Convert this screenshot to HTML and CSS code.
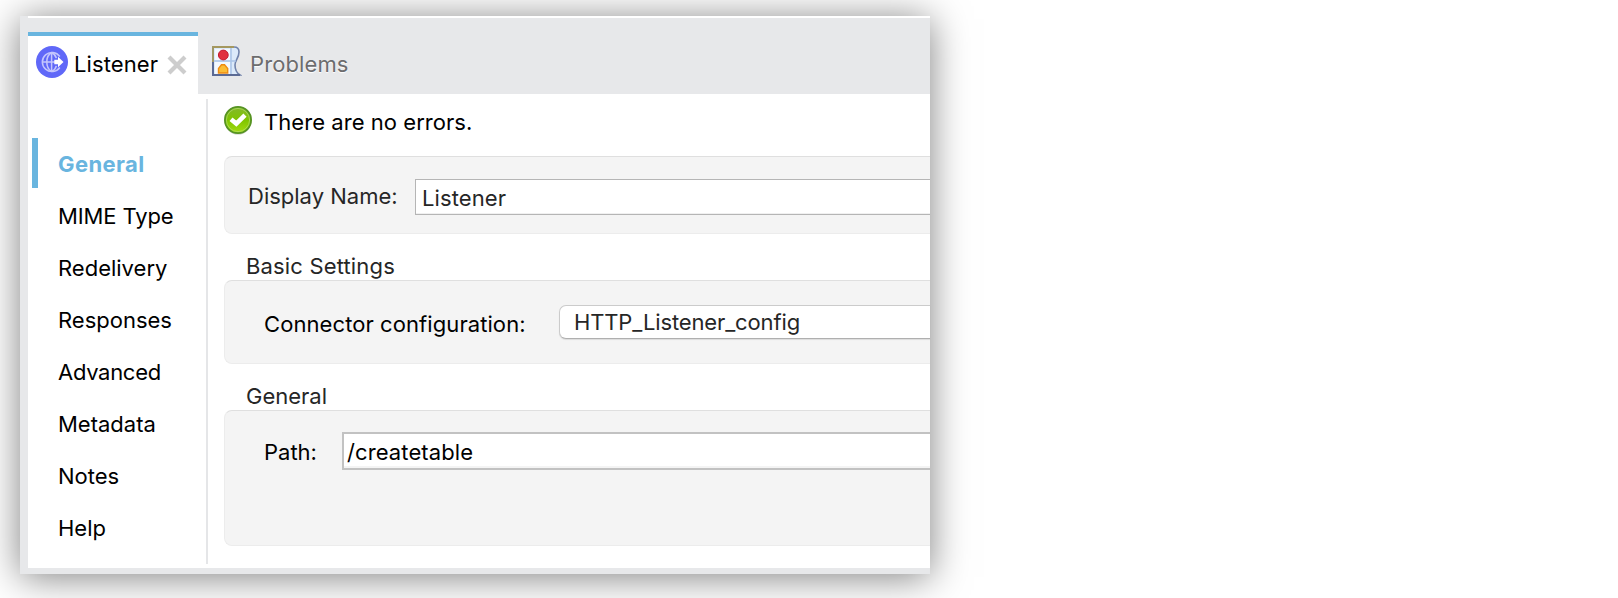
FILE: index.html
```html
<!DOCTYPE html>
<html lang="en">
<head>
<meta charset="utf-8">
<title>Listener</title>
<link rel="stylesheet" href="styles.css">
</head>
<body>
<main class="window">
  <header class="tabs">
    <div class="tab tab-active">
      <svg class="icon-globe" width="32" height="32" viewBox="0 0 32 32">
        <circle cx="16" cy="16" r="16" fill="#6068f8"/>
        <g fill="none" stroke="#c4c6fd" stroke-width="1.5">
          <path d="M23.8 10.5A9.6 9.6 0 1 0 23.8 21.5"/>
          <path d="M15.6 6.5V25.5M6.4 16H19M15.6 6.5C9.2 10 9.2 22 15.6 25.5M15.6 6.5Q19.4 8.3 20.3 12.2M15.6 25.5Q19.4 23.7 20.3 19.8"/>
        </g>
        <path d="M18.3 13.7H22V10.7L27.5 16L22 21.3V18.3H18.3Z" fill="#fff"/>
      </svg>
      <span class="tab-title">Listener</span>
      <svg class="icon-close" width="20" height="20" viewBox="0 0 20 20"><path d="M2 2L18 18M18 2L2 18" stroke="#cdcdcd" stroke-width="4.2"/></svg>
    </div>
    <div class="tab">
      <svg class="icon-problems" width="30" height="30" viewBox="0 0 30 30">
        <path d="M1 1H22Q27 1 27 6C27 12 23 14 23 19Q23 26 28 29H1Z" fill="#dceafa" stroke="#7183ab" stroke-width="1.6"/>
        <path d="M3 3H18V14H3ZM3 16H18V28H3Z" fill="#f3f8fe"/>
        <path d="M2 15H24M19 2V28" stroke="#a9c4e8" stroke-width="1.5"/>
        <path d="M1 28V1H22" fill="none" stroke="#a5985f" stroke-width="1.8"/>
        <path d="M1 16V29H28" fill="none" stroke="#5b6a94" stroke-width="2"/>
        <circle cx="11.3" cy="9" r="4.9" fill="#e0303e" stroke="#c41c30" stroke-width="1"/>
        <path d="M6.5 27V22.5L9.5 18.8H12.5L15.7 22.5V27Z" fill="#fbbd35" stroke="#ee8b12" stroke-width="1.4"/>
      </svg>
      <span class="tab-title muted">Problems</span>
    </div>
  </header>
  <div class="body">
    <nav class="side">
      <a class="item selected">General</a>
      <a class="item tight">MIME Type</a>
      <a class="item">Redelivery</a>
      <a class="item">Responses</a>
      <a class="item tighter">Advanced</a>
      <a class="item">Metadata</a>
      <a class="item">Notes</a>
      <a class="item">Help</a>
    </nav>
    <section class="content">
      <div class="status">
        <svg width="30" height="30" viewBox="0 0 30 30">
          <defs><linearGradient id="ok" x1="0" y1="0" x2="0" y2="1"><stop offset="0" stop-color="#84b82c"/><stop offset=".5" stop-color="#7fc400"/><stop offset="1" stop-color="#a4dc10"/></linearGradient></defs>
          <ellipse cx="15" cy="16.2" rx="13.2" ry="13.4" fill="#8f9a88" opacity=".5"/>
          <circle cx="15" cy="15" r="13.1" fill="url(#ok)" stroke="#569322" stroke-width="1.8"/>
          <circle cx="15" cy="15" r="11.6" fill="none" stroke="#b5dc72" stroke-width="1" opacity=".7"/>
          <path d="M8 14.2L13.3 18.6L22 10.2" fill="none" stroke="#fff" stroke-width="4.6"/>
        </svg>
        <span>There are no errors.</span>
      </div>
      <div class="panel panel-name">
        <span class="label soft">Display Name:</span>
        <div class="input input-name">Listener</div>
      </div>
      <h2 class="heading loose">Basic Settings</h2>
      <div class="panel panel-config">
        <span class="label">Connector configuration:</span>
        <div class="select">HTTP_Listener_config</div>
      </div>
      <h2 class="heading">General</h2>
      <div class="panel panel-path">
        <span class="label">Path:</span>
        <div class="input input-path">/createtable</div>
      </div>
    </section>
  </div>
</main>
</body>
</html>
```
FILE: styles.css
```css
* { box-sizing: border-box; }
body {
  margin: 0;
  padding: 16px 0 0 20px;
  height: 598px;
  overflow: hidden;
  background: #fff;
  font: 22px/26px Inter, "Liberation Sans", sans-serif;
  color: #000;
  white-space: nowrap;
}
.window {
  width: 910px;
  height: 558px;
  padding: 0 0 6px 8px;
  background: #e7e8ea;
  box-shadow: 0 3px 36px rgba(0, 0, 0, .5);
  display: flex;
  flex-direction: column;
}
.tabs {
  height: 78px;
  flex: none;
  border-top: 2px solid #fff;
  padding-top: 14px;
  display: flex;
}
.tab { display: flex; height: 62px; padding: 12px 0 0 14px; }
.tab-active {
  width: 170px;
  padding: 10px 0 0 8px;
  background: #fff;
  border-top: 4px solid #69b5df;
}
.tab-title { margin: 5px 0 0 6px; letter-spacing: .1px; }
.tab-active .tab-title { width: 84px; }
.icon-close { margin: 9px 0 0 9px; }
.icon-problems { margin-top: 2px; }
.muted { color: #6c6c6e; margin: 7px 0 0 8px; text-shadow: 0 1px 1px #fff; }
.body { flex: 1; min-height: 0; display: flex; background: #fff; }
.side { width: 178px; padding: 44px 0 0 4px; }
.item {
  display: block;
  height: 50px;
  margin-bottom: 2px;
  padding: 13px 0 0 20px;
  border-left: 6px solid transparent;
}
.selected { border-color: #69b5df; color: #69b5df; font-weight: 700; letter-spacing: .4px; }
.tight { letter-spacing: -.12px; }
.tighter { letter-spacing: -.3px; }
.content {
  flex: 1;
  min-width: 0;
  margin: 5px 0 4px;
  border-left: 2px solid #e5e6e8;
  padding-left: 16px;
}
.status { height: 57px; padding-top: 6px; display: flex; }
.status svg { flex: none; margin-left: -1px; }
.status span { margin: 4px 0 0 11px; letter-spacing: .05px; }
.panel {
  display: flex;
  background: #f4f4f4;
  border: 1px solid #ececec;
  border-top-color: #dfdfdf;
  border-right: 0;
  border-radius: 8px 0 0 8px;
}
.soft, .heading, .select, .input-name { color: #262626; }
.heading { margin: 0; height: 46px; padding: 19px 0 0 22px; font: inherit; }
.loose { letter-spacing: .16px; }
.panel-name { height: 78px; padding: 22px 0 0 23px; }
.panel-name .label { width: 167px; padding-top: 4px; }
.input { flex: 1; background: #fff; border: 1px solid #b5b5b5; border-right: 0; letter-spacing: .1px; }
.input-name { height: 36px; padding: 5px 0 0 6px; box-shadow: inset 0 -1px #f0f0f0; }
.panel-config { height: 84px; padding: 24px 0 0 39px; }
.panel-config .label { width: 295px; padding-top: 6px; letter-spacing: .08px; }
.select {
  flex: 1;
  height: 34px;
  padding: 3px 0 0 14px;
  background: #fff;
  border: 1px solid #cbcbcb;
  border-bottom-color: #afafaf;
  border-right: 0;
  border-radius: 7px 0 0 7px;
  box-shadow: 0 1px 1px rgba(0, 0, 0, .1);
  letter-spacing: -.13px;
}
.panel-path { height: 136px; padding: 21px 0 0 39px; }
.panel-path .label { width: 78px; padding-top: 7px; }
.input-path {
  height: 38px;
  padding: 5px 0 0 3px;
  border: 2px solid #c2c2c2;
  border-right: 0;
  box-shadow: inset 0 -2px #f4f4f4;
}
```
